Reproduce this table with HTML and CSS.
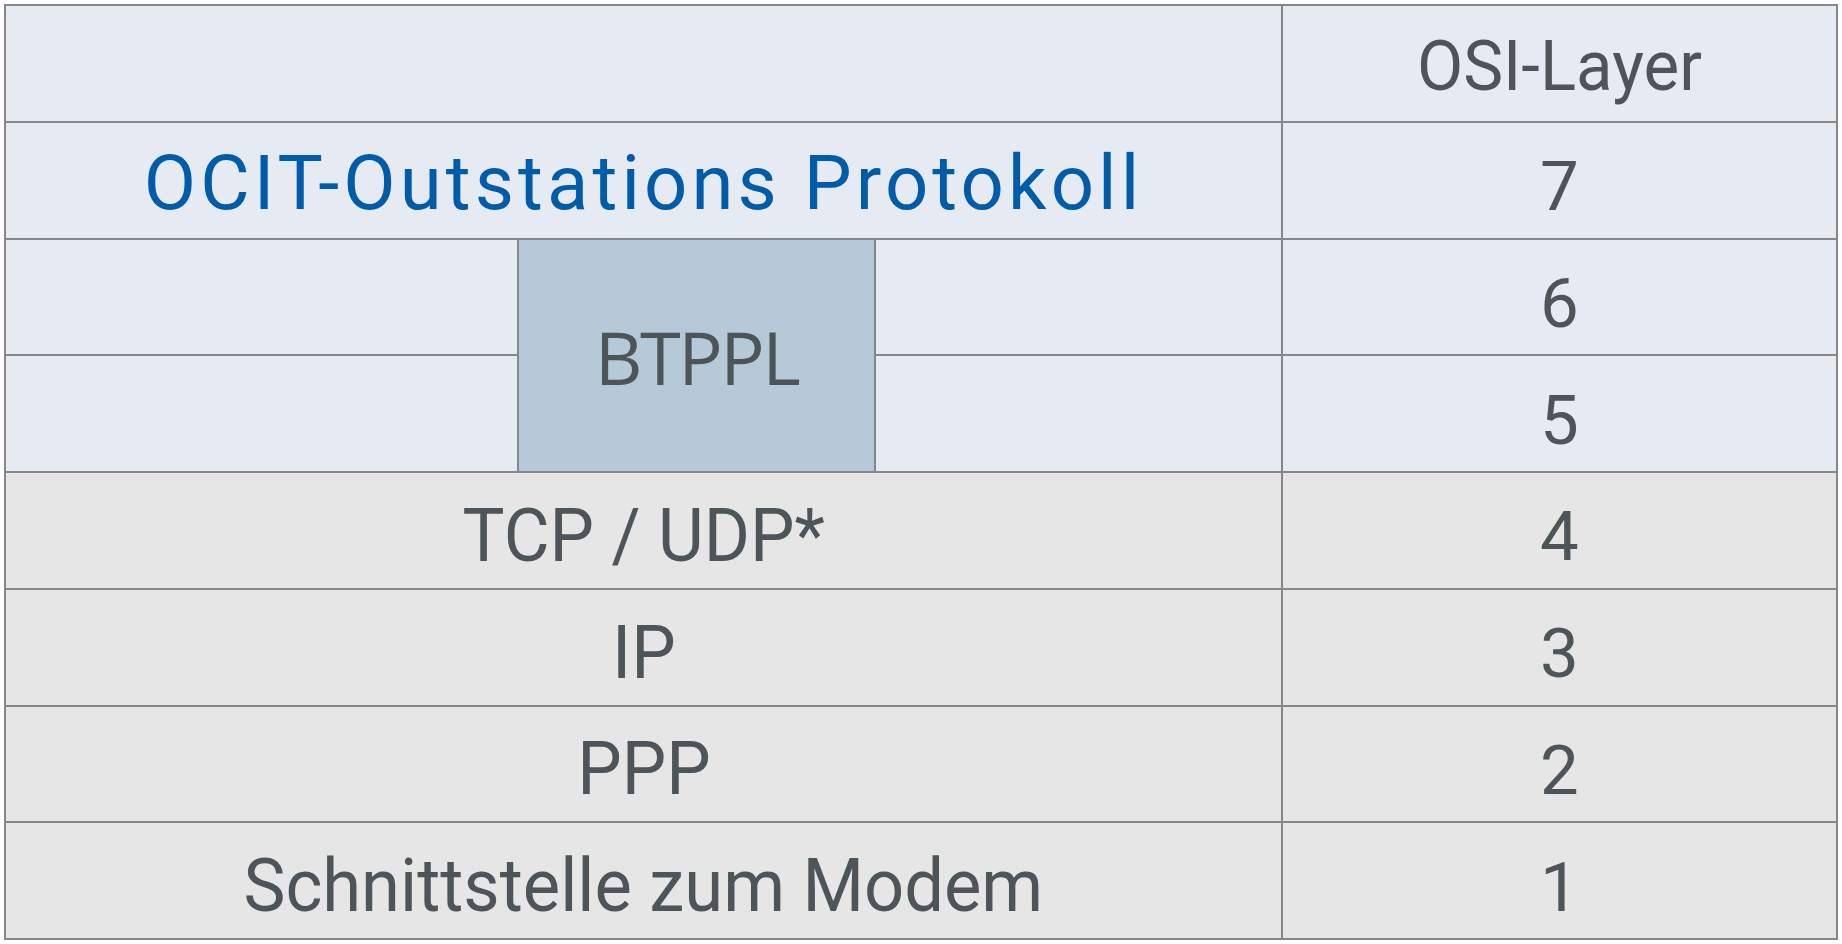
FILE: index.html
```html
<!DOCTYPE html>
<html lang="de">
<head>
<meta charset="utf-8">
<title>OCIT-Outstations Protokollstapel</title>
<link rel="stylesheet" href="styles.css">
</head>
<body>
<div class="page">
  <div class="stack">
    <div class="cell blue wide"></div>
    <div class="cell blue osi head"><span class="t">OSI-Layer</span></div>

    <div class="cell blue wide ocit"><span class="t">OCIT-Outstations Protokoll</span></div>
    <div class="cell blue osi num"><span class="t">7</span></div>

    <div class="cell blue"></div>
    <div class="cell btppl"><span class="t">BTPPL</span></div>
    <div class="cell blue"></div>
    <div class="cell blue osi num"><span class="t">6</span></div>

    <div class="cell blue"></div>
    <div class="cell blue"></div>
    <div class="cell blue osi num"><span class="t">5</span></div>

    <div class="cell grey wide layer"><span class="t">TCP / UDP*</span></div>
    <div class="cell grey osi num"><span class="t">4</span></div>

    <div class="cell grey wide layer"><span class="t">IP</span></div>
    <div class="cell grey osi num"><span class="t">3</span></div>

    <div class="cell grey wide layer"><span class="t">PPP</span></div>
    <div class="cell grey osi num"><span class="t">2</span></div>

    <div class="cell grey wide layer"><span class="t">Schnittstelle zum Modem</span></div>
    <div class="cell grey osi num"><span class="t">1</span></div>
  </div>
</div>
</body>
</html>
```

FILE: styles.css
```css
html, body {
  margin: 0;
  padding: 0;
  background: #ffffff;
}

.page {
  padding: 4px;
}

.stack {
  width: 1834px;
  height: 936px;
  box-sizing: border-box;
  padding: 2px;
  display: grid;
  grid-template-columns: 511px 355px 405px 553px;
  grid-template-rows: repeat(8, 1fr);
  gap: 2px;
  background: #85878a;
  font-family: Roboto, "Liberation Sans", sans-serif;
  color: #4d5559;
}

.cell {
  display: flex;
  align-items: center;
  justify-content: center;
  line-height: 1;
  white-space: nowrap;
}

.t {
  display: inline-block;
}

.wide {
  grid-column: 1 / 4;
}

.blue {
  background: #e6ebf3;
}

.grey {
  background: #e6e6e6;
}

.osi {
  grid-column: 4;
}

.head {
  font-size: 70px;
  padding-top: 6px;
}

.head .t {
  transform: scaleX(0.96);
}

.num {
  font-size: 69px;
  padding-top: 13px;
}

.layer {
  font-size: 75px;
  padding-top: 10px;
}

.layer .t {
  transform: scaleX(0.94);
}

.ocit {
  color: #005ca8;
  font-size: 76px;
  letter-spacing: 4.1px;
  padding-top: 6px;
}

.btppl {
  grid-column: 2;
  grid-row: 3 / 5;
  background: #b6c9d8;
  font-family: "Open Sans", sans-serif;
  font-size: 74px;
  letter-spacing: -2.5px;
  padding-top: 4px;
}
```
